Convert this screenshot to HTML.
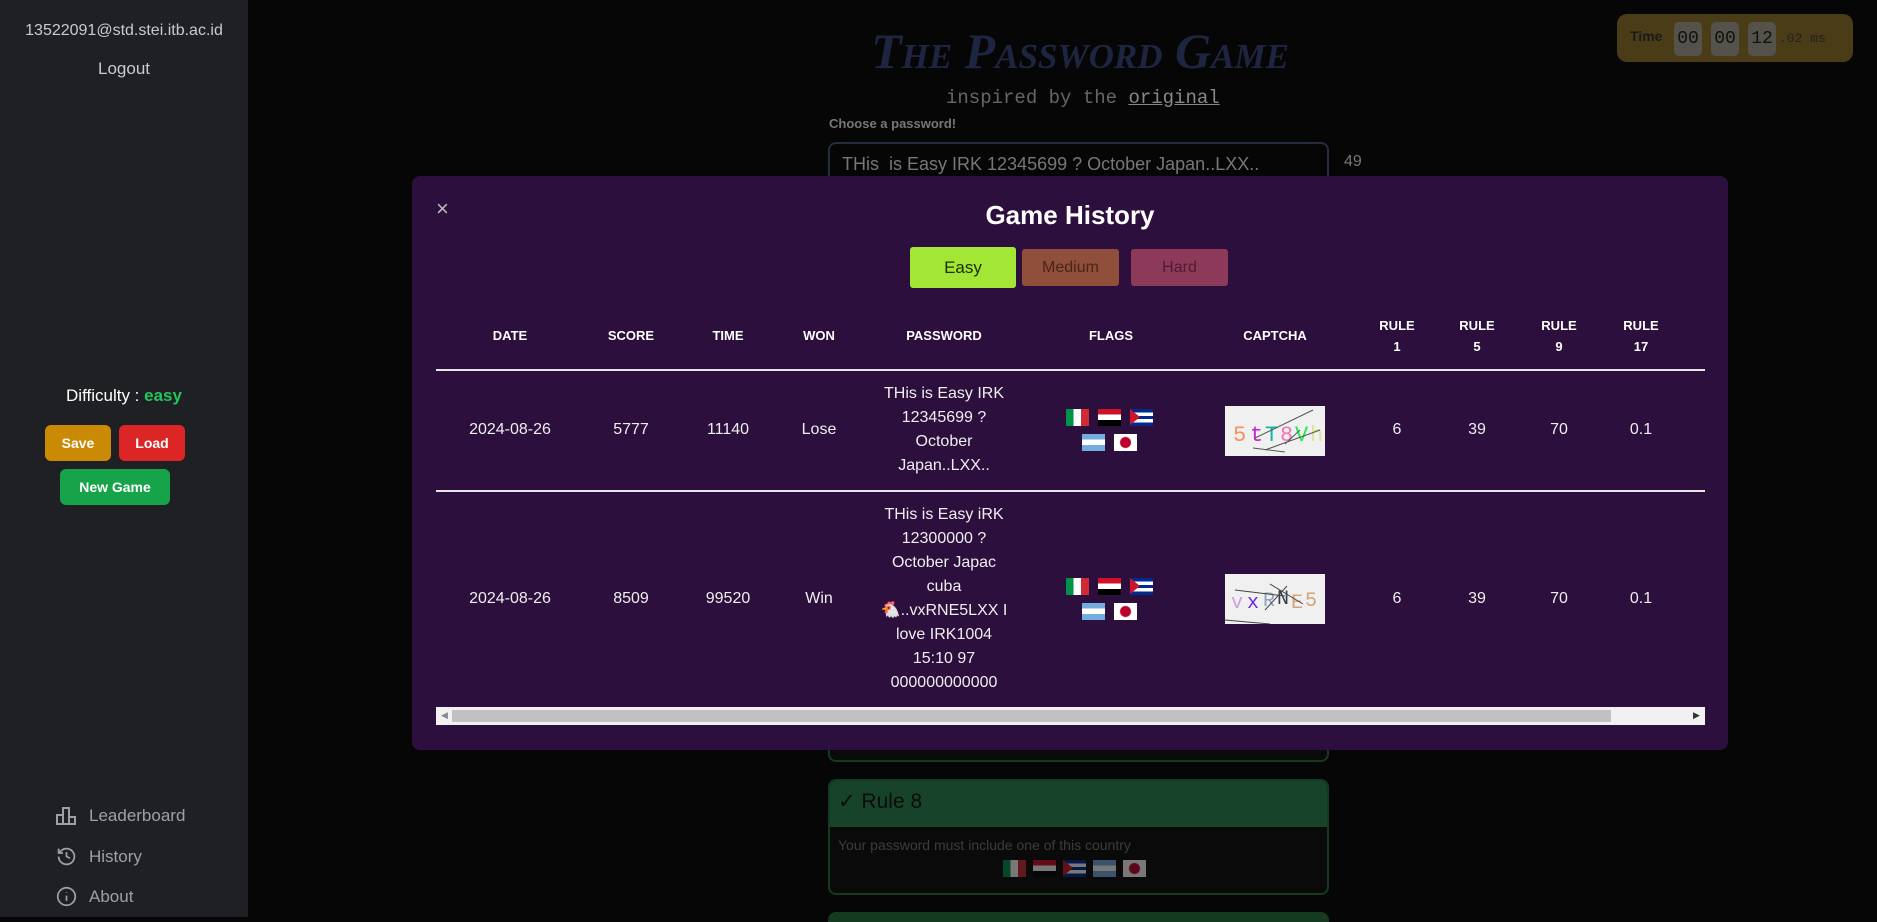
<!DOCTYPE html>
<html><head><meta charset="utf-8"><style>
*{box-sizing:border-box;margin:0;padding:0}
body{width:1877px;height:917px;overflow:hidden;background:#060606;font-family:"Liberation Sans",sans-serif;position:relative}
.abs{position:absolute}
.sb{left:0;top:0;width:248px;height:917px;background:#1f2023}
.c{text-align:center}
.btn{position:absolute;border-radius:6px;color:#fff;font-weight:bold;font-size:14px;display:flex;align-items:center;justify-content:center}
.nav{position:absolute;left:56px;color:#9ca0aa;font-size:17px;display:flex;align-items:center;gap:12px}
.modal{left:412px;top:176px;width:1316px;height:574px;background:#2d0f3e;border-radius:8px}
.h{position:absolute;color:#fff;font-weight:bold;font-size:13px;text-align:center;line-height:21px}
.t{position:absolute;color:#eee;font-size:16px;text-align:center;line-height:24px}
.fl{position:absolute;width:23px;height:17px}
.cu{background:linear-gradient(#002a8f 20%,#fff 20% 40%,#002a8f 40% 60%,#fff 60% 80%,#002a8f 80%)}
.cu::before{content:"";position:absolute;left:0;top:0;border-left:10px solid #cf142b;border-top:8.5px solid transparent;border-bottom:8.5px solid transparent}
.it{background:linear-gradient(90deg,#009246 33%,#fff 33% 66%,#ce2b37 66%)}
.eg{background:linear-gradient(#ce1126 33%,#fff 33% 66%,#000 66%)}
.ar{background:linear-gradient(#74acdf 33%,#fff 33% 66%,#74acdf 66%)}
.jp{background:radial-gradient(circle,#bc002d 5px,#fff 6px)}
</style></head><body>
<div class="abs sb"></div>
<div class="abs c" style="left:0;width:248px;top:22px;color:#c8cad0;font-size:16px">13522091@std.stei.itb.ac.id</div>
<div class="abs c" style="left:0;width:248px;top:59px;color:#c8cad0;font-size:17px">Logout</div>
<div class="abs c" style="left:0;width:248px;top:386px;color:#fff;font-size:17px">Difficulty : <b style="color:#22c55e">easy</b></div>
<div class="btn" style="left:45px;top:425px;width:66px;height:36px;background:#ca8a04">Save</div>
<div class="btn" style="left:119px;top:425px;width:66px;height:36px;background:#dc2626">Load</div>
<div class="btn" style="left:60px;top:469px;width:110px;height:36px;background:#16a34a">New Game</div>
<div class="nav" style="top:806px"><svg width="21" height="18" viewBox="0 0 21 18" fill="none" stroke="#9ca0aa" stroke-width="2"><rect x="1" y="8" width="6" height="9"/><rect x="7" y="1" width="6" height="16"/><rect x="13" y="10" width="6" height="7"/></svg>Leaderboard</div>
<div class="nav" style="top:846px"><svg width="21" height="21" viewBox="0 0 24 24" fill="none" stroke="#9ca0aa" stroke-width="2"><path d="M3 12a9 9 0 1 0 3-6.7L3 8"/><path d="M3 3v5h5"/><path d="M12 7v5l4 2"/></svg>History</div>
<div class="nav" style="top:886px"><svg width="21" height="21" viewBox="0 0 24 24" fill="none" stroke="#9ca0aa" stroke-width="2"><circle cx="12" cy="12" r="10"/><path d="M12 11v6M12 7v.5"/></svg>About</div>

<div class="abs c" style="left:780px;width:600px;top:22px;color:#1e2540;font-size:50px;font-weight:bold;font-style:italic;font-variant:small-caps;font-family:'Liberation Serif',serif">The Password Game</div>
<div class="abs" style="left:946px;top:87px;color:#666;font-family:'Liberation Mono',monospace;font-size:19px">inspired by the <u style="color:#888">original</u></div>
<div class="abs" style="left:829px;top:116px;color:#777;font-size:13px;font-weight:bold">Choose a password!</div>
<div class="abs" style="left:828px;top:142px;width:501px;height:60px;border:2px solid #262c42;border-radius:8px;padding:10px 12px;color:#777;font-size:18px">THis&nbsp; is Easy IRK 12345699 ? October Japan..LXX..</div>
<div class="abs" style="left:1344px;top:153px;color:#777;font-size:16px">49</div>
<div class="abs" style="left:1617px;top:14px;width:236px;height:48px;background:#4a3c17;border-radius:10px"></div>
<div class="abs" style="left:1630px;top:28px;color:#1a1a1a;font-size:14px;font-weight:bold">Time</div>
<div class="abs" style="left:1674px;top:22px;width:28px;height:34px;background:#55524c;border-radius:5px;color:#111;font-family:'Liberation Mono',monospace;font-size:18px;text-align:center;line-height:34px">00</div>
<div class="abs" style="left:1711px;top:22px;width:28px;height:34px;background:#55524c;border-radius:5px;color:#111;font-family:'Liberation Mono',monospace;font-size:18px;text-align:center;line-height:34px">00</div>
<div class="abs" style="left:1748px;top:22px;width:28px;height:34px;background:#55524c;border-radius:5px;color:#111;font-family:'Liberation Mono',monospace;font-size:18px;text-align:center;line-height:34px">12</div>
<div class="abs" style="left:1779px;top:31px;color:#222;font-family:'Liberation Mono',monospace;font-size:13px">.02 ms</div>

<div class="abs" style="left:828px;top:720px;width:501px;height:42px;border:2px solid #143a20;border-top:none;border-radius:0 0 8px 8px;background:#0a0a0a"></div>
<div class="abs" style="left:828px;top:779px;width:501px;height:116px;border:2px solid #143a20;border-radius:8px;background:#0a0a0a;overflow:hidden">
<div style="height:46px;background:#17432a;color:#0c0c0c;font-size:21px;padding:8px 8px">✓ Rule 8</div>
<div style="color:#3c3c3c;font-size:14px;padding:10px 8px">Your password must include one of this country</div></div>
<div class="fl it" style="left:1003px;top:860px;opacity:.45"></div>
<div class="fl eg" style="left:1033px;top:860px;opacity:.45"></div>
<div class="fl cu" style="left:1063px;top:860px;opacity:.45"></div>
<div class="fl ar" style="left:1093px;top:860px;opacity:.45"></div>
<div class="fl jp" style="left:1123px;top:860px;opacity:.45"></div>
<div class="abs" style="left:828px;top:912px;width:501px;height:10px;background:#143a20;border-radius:8px 8px 0 0"></div>

<div class="abs modal"></div>
<div class="abs" style="left:436px;top:196px;color:#bbb;font-size:22px">×</div>
<div class="abs c" style="left:412px;width:1316px;top:200px;color:#fff;font-size:26px;font-weight:bold">Game History</div>
<div class="btn" style="left:910px;top:247px;width:106px;height:41px;background:#a3e635;color:#1a2e05;font-weight:normal;font-size:17px;border-radius:3px">Easy</div>
<div class="btn" style="left:1022px;top:249px;width:97px;height:37px;background:#8f4f3a;color:#4a2418;font-weight:normal;font-size:16px;border-radius:3px">Medium</div>
<div class="btn" style="left:1131px;top:249px;width:97px;height:37px;background:#8d3a5a;color:#4d1c2f;font-weight:normal;font-size:16px;border-radius:3px">Hard</div>

<div class="h" style="left:470px;width:80px;top:325px">DATE</div>
<div class="h" style="left:591px;width:80px;top:325px">SCORE</div>
<div class="h" style="left:688px;width:80px;top:325px">TIME</div>
<div class="h" style="left:779px;width:80px;top:325px">WON</div>
<div class="h" style="left:884px;width:120px;top:325px">PASSWORD</div>
<div class="h" style="left:1071px;width:80px;top:325px">FLAGS</div>
<div class="h" style="left:1225px;width:100px;top:325px">CAPTCHA</div>
<div class="h" style="left:1372px;width:50px;top:315px">RULE<br>1</div>
<div class="h" style="left:1452px;width:50px;top:315px">RULE<br>5</div>
<div class="h" style="left:1534px;width:50px;top:315px">RULE<br>9</div>
<div class="h" style="left:1616px;width:50px;top:315px">RULE<br>17</div>
<div class="abs" style="left:436px;top:369px;width:1269px;height:2px;background:#e6e6e6"></div>
<div class="abs" style="left:436px;top:490px;width:1269px;height:2px;background:#e6e6e6"></div>

<div class="t" style="left:450px;width:120px;top:418px">2024-08-26</div>
<div class="t" style="left:591px;width:80px;top:418px">5777</div>
<div class="t" style="left:688px;width:80px;top:418px">11140</div>
<div class="t" style="left:779px;width:80px;top:418px">Lose</div>
<div class="t" style="left:874px;width:140px;top:382px">THis is Easy IRK<br>12345699 ?<br>October<br>Japan..LXX..</div>
<div class="t" style="left:1372px;width:50px;top:418px">6</div>
<div class="t" style="left:1452px;width:50px;top:418px">39</div>
<div class="t" style="left:1534px;width:50px;top:418px">70</div>
<div class="t" style="left:1616px;width:50px;top:418px">0.1</div>

<div class="t" style="left:450px;width:120px;top:587px">2024-08-26</div>
<div class="t" style="left:591px;width:80px;top:587px">8509</div>
<div class="t" style="left:688px;width:80px;top:587px">99520</div>
<div class="t" style="left:779px;width:80px;top:587px">Win</div>
<div class="t" style="left:864px;width:160px;top:503px">THis is Easy iRK<br>12300000 ?<br>October Japac<br>cuba<br>🐔..vxRNE5LXX I<br>love IRK1004<br>15:10 97<br>000000000000</div>
<div class="t" style="left:1372px;width:50px;top:587px">6</div>
<div class="t" style="left:1452px;width:50px;top:587px">39</div>
<div class="t" style="left:1534px;width:50px;top:587px">70</div>
<div class="t" style="left:1616px;width:50px;top:587px">0.1</div>

<div class="fl it" style="left:1066px;top:409px"></div>
<div class="fl eg" style="left:1098px;top:409px"></div>
<div class="fl cu" style="left:1130px;top:409px"></div>
<div class="fl ar" style="left:1082px;top:434px"></div>
<div class="fl jp" style="left:1114px;top:434px"></div>
<div class="fl it" style="left:1066px;top:578px"></div>
<div class="fl eg" style="left:1098px;top:578px"></div>
<div class="fl cu" style="left:1130px;top:578px"></div>
<div class="fl ar" style="left:1082px;top:603px"></div>
<div class="fl jp" style="left:1114px;top:603px"></div>

<svg class="abs" style="left:1225px;top:406px" width="100" height="50"><rect width="100" height="50" fill="#f0f0f0"/><text x="8" y="35" font-size="22" font-family="Liberation Mono" fill="#f98f57">5</text><text x="25" y="35" font-size="22" font-family="Liberation Mono" fill="#c026d3">t</text><text x="40" y="35" font-size="22" font-family="Liberation Mono" fill="#14b8a6">T</text><text x="55" y="35" font-size="22" font-family="Liberation Mono" fill="#f472b6">8</text><text x="70" y="35" font-size="22" font-family="Liberation Mono" fill="#22ee44">V</text><text x="85" y="35" font-size="22" font-family="Liberation Mono" fill="#e2e29a">h</text><path d="M30 32L88 4M28 42L60 46M40 44L95 24M60 38L75 24" stroke="#555" fill="none"/></svg>
<svg class="abs" style="left:1225px;top:574px" width="100" height="50"><rect width="100" height="50" fill="#f0f0f0"/><text x="6" y="34" font-size="20" font-family="Liberation Mono" fill="#c8a0e0">v</text><text x="22" y="34" font-size="20" font-family="Liberation Mono" fill="#6d28d9">x</text><text x="38" y="32" font-size="20" font-family="Liberation Mono" fill="#94a3b8">R</text><text x="52" y="30" font-size="20" font-family="Liberation Mono" fill="#334155">N</text><text x="66" y="34" font-size="20" font-family="Liberation Mono" fill="#d4a574">E</text><text x="80" y="32" font-size="20" font-family="Liberation Mono" fill="#d4a574">5</text><path d="M10 16L60 22M45 10L78 30M40 36L62 12M0 46L45 50" stroke="#444" fill="none"/></svg>

<div class="abs" style="left:436px;top:707px;width:1269px;height:18px;background:#f1f1f1"></div>
<div class="abs" style="left:452px;top:710px;width:1159px;height:12px;background:#c1c1c1"></div>
<div class="abs" style="left:441px;top:710px;color:#888;font-size:9px">◀</div>
<div class="abs" style="left:1693px;top:710px;color:#333;font-size:9px">▶</div>
</body></html>
